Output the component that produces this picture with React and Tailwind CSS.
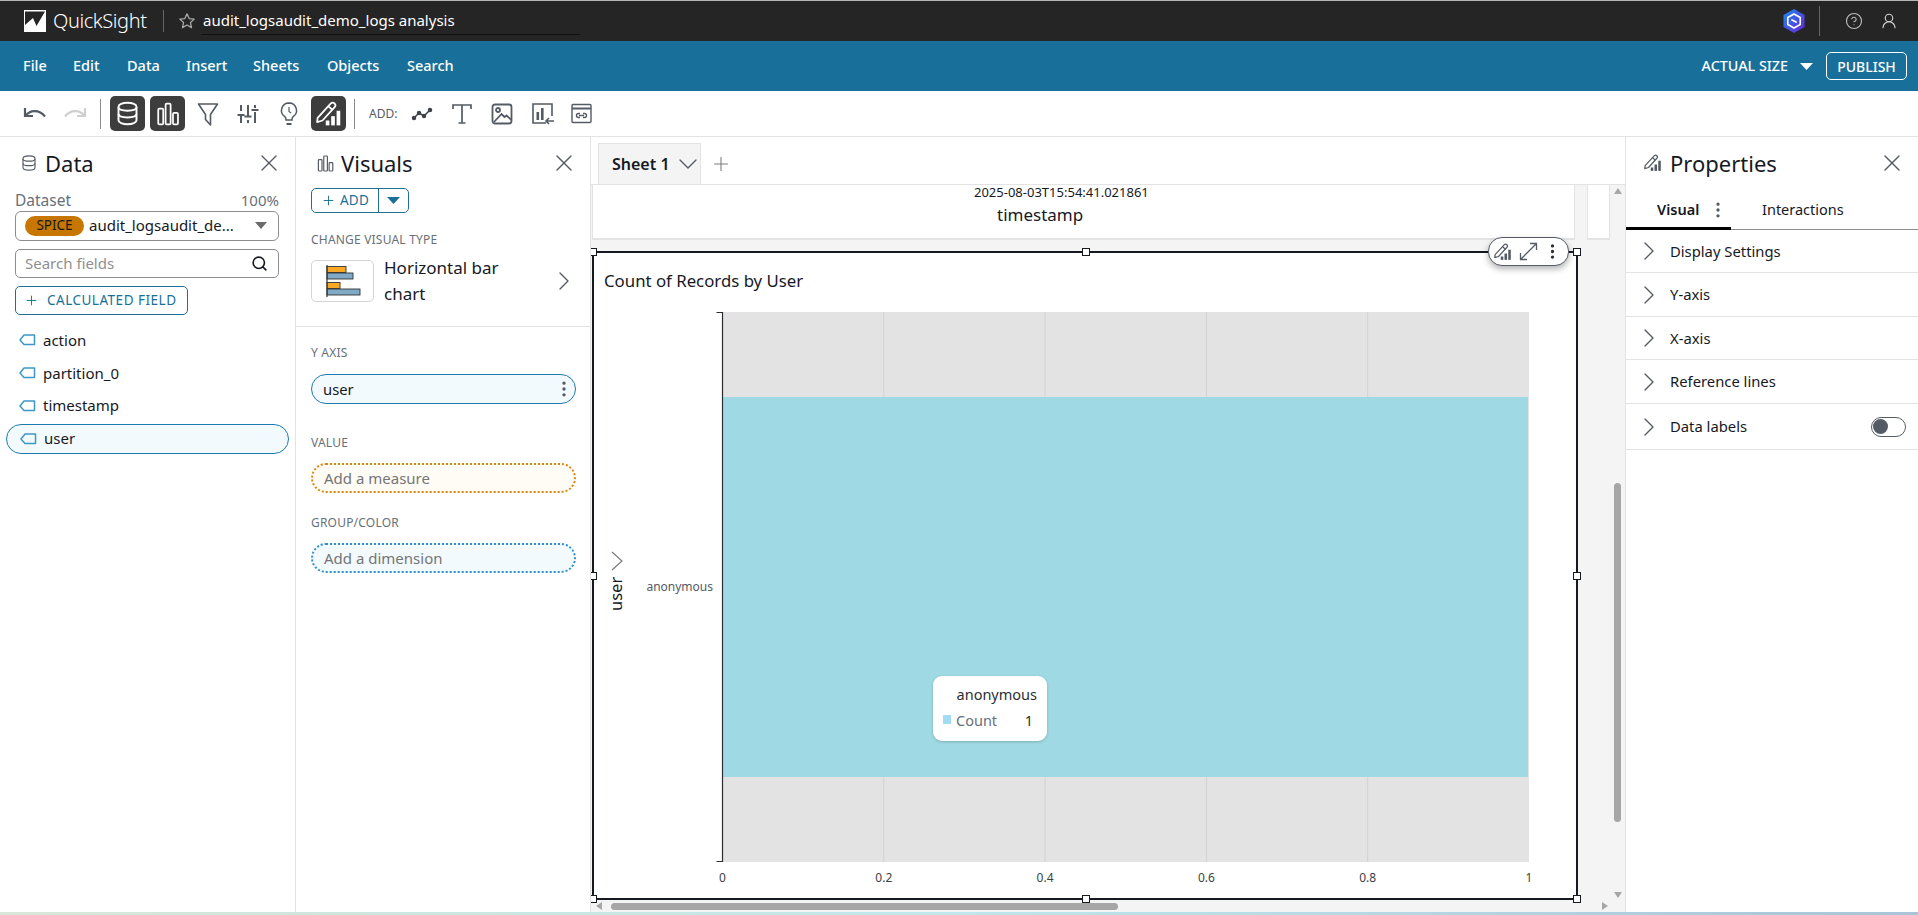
import React from "react";
import { X, ChevronRight, ChevronDown, Plus, Search, CircleHelp, UserRound, EllipsisVertical } from "lucide-react";

const Db = ({ size = 24, sw = 1.7 }) => (
  <svg width={size} height={size} viewBox="0 0 24 24" fill="none" stroke="currentColor" strokeWidth={sw}>
    <path d="M4 6c0-2 3.500-3.500 8-3.500S20 4 20 6v12c0 2-3.500 3.500-8 3.500S4 20 4 18z" />
    <path d="M4 6.500c0 2 3.500 3 8 3s8-1 8-3M4 12.500c0 2 3.500 3 8 3s8-1 8-3" />
  </svg>
);
const Bars = ({ size = 24, c = "currentColor", sw = 1.6 }) => (
  <svg width={size} height={size} viewBox="0 0 24 24" fill="none" stroke={c} strokeWidth={sw}>
    <rect x="3" y="7" width="4.600" height="14.500" rx="1" />
    <rect x="9.800" y="2.500" width="4.600" height="19" rx="1" />
    <rect x="16.600" y="11" width="4.600" height="10.500" rx="1" />
  </svg>
);
const Paint = ({ size = 24, c = "currentColor" }) => (
  <svg width={size} height={size} viewBox="0 0 24 24" fill="none" stroke={c} strokeWidth="1.600" strokeLinejoin="round">
    <path d="M1.500 15.500 13.500 2.500c1-1 2.600-1.100 3.600-.2 1 .9 1 2.400.1 3.400L6 18l-5 1.500z" />
    <path d="M11.500 5l3.800 3.300" />
    <rect x="9" y="18" width="3.400" height="4.500" fill={c} stroke="none" />
    <rect x="14" y="14" width="3.400" height="8.500" fill={c} stroke="none" />
    <rect x="19" y="9" width="3.400" height="13.500" fill={c} stroke="none" />
  </svg>
);
const Tag = () => (
  <svg width="17" height="12" viewBox="0 0 17 12" fill="none" stroke="#3f97c8" strokeWidth="1.500" strokeLinejoin="round" className="shrink-0">
    <path d="M5 1h10.500v9.500H5L1 6z" />
  </svg>
);
const Tri = ({ c = "#6b6b6b", w = 12, h = 7 }) => (
  <svg width={w} height={h} viewBox="0 0 12 7" preserveAspectRatio="none"><path d="M0 0h12L6 7z" fill={c} /></svg>
);
const Divider = () => <div className="w-px h-[30px] bg-[#8a8a8a] shrink-0" />;

const ToolBtn = ({ active, children, cls = "" }) => (
  <div className={`w-[35px] h-[35px] rounded-[5px] flex items-center justify-center shrink-0 ${active ? "bg-[#3d3d3d] text-white" : "text-[#545b64]"} ${cls}`}>
    {children}
  </div>
);

const PanelHeader = ({ icon, title, pad = "pl-5", iw = "w-[26px]" }) => (
  <div className={`flex items-center h-[52px] ${pad} pr-[12px]`}>
    <span className={`${iw} flex text-[#545b64]`}>{icon}</span>
    <span className="text-[22px] text-[#16191f] flex-1 leading-none">{title}</span>
    <X size={28} strokeWidth={1.150} className="text-[#545b64]" />
  </div>
);

const FieldRow = ({ label, h, active, cls = "" }) => (
  <div className={`flex items-center gap-[7px] text-[15px] text-[#16191f] pl-[13px] ml-[6px] w-[283px] ${h} ${cls} ${active ? "border border-[#1f7ab0] rounded-full bg-[#f2fafe]" : ""}`}>
    <Tag />
    <span>{label}</span>
  </div>
);

const Label = ({ children, cls = "" }) => (
  <div className={`text-[12px] text-[#687078] tracking-[0.2px] leading-none ${cls}`}>{children}</div>
);

const Well = ({ children, cls }) => (
  <div className={`h-[30px] w-[265px] rounded-full flex items-center pl-[11px] text-[15px] text-[#757575] border-2 border-dotted ${cls}`}>{children}</div>
);

const PropRow = ({ label, h, right }) => (
  <div className={`flex items-center border-b border-[#e3e3e3] pl-[7px] pr-[13px] ${h}`}>
    <ChevronRight size={32} strokeWidth={1} className="text-[#545b64] shrink-0" />
    <span className="ml-[5px] flex-1 text-[14.800px] text-[#16191f]">{label}</span>
    {right}
  </div>
);

const Handle = ({ cls }) => <div className={`absolute w-[8px] h-[8px] bg-white border border-[#16191f] ${cls}`} />;

const xs = [722.5, 883.8, 1045.1, 1206.4, 1367.7, 1529];
const ticks = ["0", "0.2", "0.4", "0.6", "0.8", "1"];

const Chart = () => (
  <svg width="980" height="592" viewBox="595 305 980 592" className="block">
    <rect x="722" y="312" width="807" height="550" fill="#e3e3e3" />
    {xs.slice(1, 5).map((x) => (<line key={x} x1={x} x2={x} y1="312" y2="862" stroke="#d2d2d2" strokeWidth="1" />))}
    <rect x="723" y="397" width="805" height="380" fill="#9fdae4" />
    <path d="M716.500 312.500H722.500V861.500H716.500" fill="none" stroke="#2a2e33" strokeWidth="1.200" />
    <path d="M612 552l10 9-10 9" fill="none" stroke="#7d7d7d" strokeWidth="1.200" />
    <text x="0" y="0" transform="translate(622 611) rotate(-90)" fontSize="16.500" fill="#16191f">user</text>
    <text x="713" y="591" textAnchor="end" fontSize="12" fill="#545b64">anonymous</text>
    {xs.map((x, i) => (<text key={x} x={x} y="882" textAnchor="middle" fontSize="12" fill="#3b3f44">{ticks[i]}</text>))}
  </svg>
);

export default function App() {
  return (
    <div className="w-[1918px] h-[915px] overflow-hidden flex flex-col bg-white font-['Noto_Sans','Open_Sans',sans-serif]">
      {/* top bar */}
      <div className="h-[41px] shrink-0 bg-[#252525] border-t border-[#b5b5b5] flex items-center relative">
        <svg width="22" height="22" viewBox="0 0 22 22" className="ml-6 shrink-0">
          <rect width="22" height="22" fill="#fff" />
          <path d="M1 15V1.500h20L12.500 16 9 8z" fill="#252525" />
        </svg>
        <span className="ml-[7px] text-[20px] text-white font-light leading-none w-[103px] tracking-[-0.4px]">QuickSight</span>
        <div className="w-px h-[22px] bg-[#666] ml-[7px]" />
        <svg width="18" height="18" viewBox="0 0 24 24" fill="none" stroke="#a9a9a9" strokeWidth="1.700" strokeLinejoin="round" className="ml-[14px]">
          <path d="M12 2.500l2.900 6.200 6.700.8-5 4.600 1.400 6.700L12 17.400l-6 3.400 1.400-6.700-5-4.600 6.700-.8z" />
        </svg>
        <div className="ml-[5px] w-[379px] h-[27px] border-b border-[#111] flex items-center pl-[2px] text-[15px] text-white">
          audit_logsaudit_demo_logs analysis
        </div>
        <div className="flex-1" />
        <svg width="24" height="26" viewBox="0 0 24 26" className="mr-[-1px]">
          <defs>
            <linearGradient id="hx" x1="0" y1="0" x2="1" y2="1">
              <stop offset="0" stopColor="#1b8cf0" />
              <stop offset="1" stopColor="#6a22d8" />
            </linearGradient>
          </defs>
          <path d="M12 1l10.500 6v12L12 25 1.500 19V7z" fill="url(#hx)" />
          <path d="M12 6l6.200 3.500v7L12 20l-6.200-3.500v-7z" fill="none" stroke="#fff" strokeWidth="1.600" />
          <path d="M10 12l4 2" stroke="#fff" strokeWidth="1.800" strokeLinecap="round" />
        </svg>
        <div className="w-px h-[30px] bg-[#666] ml-[14px]" />
        <CircleHelp size={18} strokeWidth={1.500} className="text-[#bdbdbd] ml-[25px]" />
        <UserRound size={18} strokeWidth={1.500} className="text-[#d5d5d5] ml-[17px] mr-[20px]" />
      </div>

      {/* menu bar */}
      <div className="h-[50px] shrink-0 bg-[#18709a] flex items-center pl-[23px] pr-[11px] text-white text-[14.500px] font-medium">
        <span className="w-[50px]">File</span>
        <span className="w-[54px]">Edit</span>
        <span className="w-[59px]">Data</span>
        <span className="w-[67px]">Insert</span>
        <span className="w-[74px]">Sheets</span>
        <span className="w-[80px]">Objects</span>
        <span>Search</span>
        <div className="flex-1" />
        <span className="text-[14.300px]">ACTUAL SIZE</span>
        <span className="ml-[12px] flex"><Tri c="#fff" w={13} h={7} /></span>
        <div className="ml-[13px] w-[81px] h-[28px] border border-white rounded-[5px] flex items-center justify-center text-[14px]">PUBLISH</div>
      </div>

      {/* toolbar */}
      <div className="h-[46px] shrink-0 border-b border-[#e3e3e3] flex items-center pl-[22px]">
        <svg width="26" height="20" viewBox="0 0 26 20" fill="none" stroke="#545b64" strokeWidth="2.200"><path d="M3 4v8h8" /><path d="M3.500 12C7.500 6 17 5 23 12.500" /></svg>
        <svg width="26" height="20" viewBox="0 0 26 20" fill="none" stroke="#cfcfcf" strokeWidth="2.200" className="ml-[14px]"><path d="M23 4v8h-8" /><path d="M22.500 12C18.500 6 9 5 3 12.500" /></svg>
        <div className="ml-[12px]"><Divider /></div>
        <ToolBtn active cls="ml-[9px]"><Db size={27} /></ToolBtn>
        <ToolBtn active cls="ml-[5px]"><Bars size={26} /></ToolBtn>
        <ToolBtn cls="ml-[5px]">
          <svg width="24" height="26" viewBox="0 0 24 26" fill="none" stroke="#545b64" strokeWidth="1.600" strokeLinejoin="round"><path d="M2.500 3h19L14.500 13.500V24l-5-5.500v-5z" /></svg>
        </ToolBtn>
        <ToolBtn cls="ml-[5px]">
          <svg width="24" height="24" viewBox="0 0 24 24" fill="none" stroke="#545b64" strokeWidth="2"><path d="M5 3v6M5 13v8M12 3v11M12 18v3M19 3v3M19 10v11M1.500 13h7M8.500 14.500h7M15.500 8h7" /></svg>
        </ToolBtn>
        <ToolBtn cls="ml-[6px]">
          <svg width="24" height="26" viewBox="0 0 24 26" fill="none" stroke="#545b64" strokeWidth="1.500"><path d="M12 2a7.500 7.500 0 00-4.200 13.700c.9.700 1.200 1.600 1.200 3.300h6c0-1.700.3-2.600 1.200-3.300A7.500 7.500 0 0012 2z" /><path d="M9.500 23h5" strokeWidth="2" /><path d="M12 6v4.500l2 1.500" strokeWidth="1.200" /></svg>
        </ToolBtn>
        <ToolBtn active cls="ml-[5px]"><Paint size={26} /></ToolBtn>
        <div className="ml-[8px]"><Divider /></div>
        <span className="ml-[14px] text-[12px] text-[#545b64] w-[35px]">ADD:</span>
        <ToolBtn>
          <svg width="22" height="22" viewBox="0 0 22 22" fill="none" stroke="#3f4347" strokeWidth="1.500"><path d="M3 15l5-5 5 3 6-6" /><circle cx="3" cy="15" r="1.500" fill="#3f4347" /><circle cx="8" cy="10" r="1.500" fill="#3f4347" /><circle cx="13" cy="13" r="1.500" fill="#3f4347" /><circle cx="19" cy="7" r="1.500" fill="#3f4347" /></svg>
        </ToolBtn>
        <ToolBtn cls="ml-[5px]">
          <svg width="22" height="24" viewBox="0 0 22 24" fill="none" stroke="#545b64" strokeWidth="1.700"><path d="M2 7V3h18v4M11 3v18M7.500 21h7" /></svg>
        </ToolBtn>
        <ToolBtn cls="ml-[5px]">
          <svg width="22" height="22" viewBox="0 0 22 22" fill="none" stroke="#545b64" strokeWidth="1.800"><rect x="1.500" y="1.500" width="19" height="19" rx="2.500" /><circle cx="7" cy="7" r="2" /><path d="M3 19l7.500-8 3 3 2-1.500 5 4.500" /></svg>
        </ToolBtn>
        <ToolBtn cls="ml-[6px]">
          <svg width="25" height="25" viewBox="0 0 25 25" fill="none" stroke="#545b64" strokeWidth="1.600"><path d="M16 22H3V3h19v12" /><rect x="6.500" y="11" width="2.600" height="8" fill="#545b64" stroke="none" /><rect x="11" y="7" width="2.600" height="12" fill="#545b64" stroke="none" /><path d="M24 20h-8m3-3l-3 3 3 3" /></svg>
        </ToolBtn>
        <ToolBtn cls="ml-[4px]">
          <svg width="21" height="21" viewBox="0 0 21 21" fill="none" stroke="#545b64" strokeWidth="1.400"><rect x="1" y="1.500" width="19" height="18" rx="1" /><path d="M1 5.500h19" strokeWidth="2" /><path d="M9 10.500H7.500a2 2 0 000 4H9M12 10.500h1.500a2 2 0 010 4H12M8 12.500h5" /></svg>
        </ToolBtn>
      </div>

      {/* main */}
      <div className="flex-1 flex min-h-0">
        {/* data panel */}
        <div className="w-[296px] shrink-0 border-r border-[#e3e3e3]">
          <PanelHeader title="Data" iw="w-[25px]" icon={<Db size={18} sw={1.500} />} />
          <div className="px-[15px] pr-[16px]">
            <div className="flex justify-between text-[15.500px] text-[#687078] leading-none mt-[4px]">
              <span>Dataset</span><span className="text-[15px]">100%</span>
            </div>
            <div className="mt-[2px] h-[30px] border border-[#8d8d8d] rounded-[6px] flex items-center pl-[9px] pr-[11px]">
              <span className="w-[59px] h-[20px] rounded-full bg-[#c77600] text-[13.500px] text-[#16191f] flex items-center justify-center shrink-0">SPICE</span>
              <span className="ml-[5px] flex-1 text-[15px] text-[#16191f] truncate">audit_logsaudit_de...</span>
              <span className="ml-[2px] flex"><Tri /></span>
            </div>
            <div className="mt-[8px] h-[29px] border border-[#8d8d8d] rounded-[5px] flex items-center pl-[9px] pr-[10px] text-[15px] text-[#8f8f8f]">
              <span className="flex-1">Search fields</span>
              <Search size={17} strokeWidth={2.300} className="text-[#16191f]" />
            </div>
            <div className="mt-[8px] w-[173px] h-[29px] border border-[#1f6f96] rounded-[5px] flex items-center pl-[8px] text-[13.500px] text-[#18709a] tracking-[0.5px]">
              <Plus size={15} strokeWidth={1.500} />
              <span className="ml-[8px] whitespace-nowrap">CALCULATED FIELD</span>
            </div>
          </div>
          <div className="mt-[9px]">
            <FieldRow label="action" h="h-[33px]" />
            <FieldRow label="partition_0" h="h-[33px]" />
            <FieldRow label="timestamp" h="h-[32px]" />
            <FieldRow label="user" h="h-[30px]" cls="mt-[2px]" active />
          </div>
        </div>

        {/* visuals panel */}
        <div className="w-[295px] shrink-0 border-r border-[#e3e3e3]">
          <PanelHeader title="Visuals" iw="w-[25px]" icon={<Bars size={19} c="#545b64" sw={1.500} />} pad="pl-[20px]" />
          <div className="pl-[15px]">
            <div className="w-[98px] h-[25px] border border-[#1f6f96] rounded-[5px] flex items-center text-[#18709a] -mt-[1px]">
              <div className="w-[67px] h-full border-r border-[#1f6f96] flex items-center justify-center gap-[4px] text-[13.500px] tracking-[0.3px]">
                <Plus size={15} strokeWidth={1.500} /><span>ADD</span>
              </div>
              <div className="flex-1 flex justify-center"><Tri c="#18709a" w={13} h={7} /></div>
            </div>
            <Label cls="mt-[21px]">CHANGE VISUAL TYPE</Label>
            <div className="flex items-center mt-[14px] h-[42px] pr-[10px]">
              <div className="w-[63px] h-[42px] border border-[#d5d5d5] rounded-[5px] flex items-center justify-center shrink-0">
                <svg width="36" height="32" viewBox="0 0 36 32" stroke="#333" strokeWidth="0.900">
                  <rect x="2" y="1.500" width="19" height="6" fill="#f9a825" />
                  <rect x="2" y="8" width="26" height="6" fill="#7fa9c4" />
                  <rect x="2" y="17.500" width="13" height="6" fill="#f9a825" />
                  <rect x="2" y="24" width="33" height="6" fill="#7fa9c4" />
                  <path d="M2 0v32" strokeWidth="1.200" />
                </svg>
              </div>
              <div className="ml-[10px] flex-1 text-[17px] leading-[26px] text-[#16191f]">Horizontal bar<br />chart</div>
              <ChevronRight size={32} strokeWidth={1} className="text-[#545b64]" />
            </div>
          </div>
          <div className="h-px bg-[#e3e3e3] mt-[24px]" />
          <div className="pl-[15px]">
            <Label cls="mt-[20px]">Y AXIS</Label>
            <div className="mt-[15px] h-[30px] w-[265px] rounded-full border border-[#1f7ab0] bg-[#f2fafe] flex items-center pl-[11px] pr-[1px] text-[14.800px] text-[#16191f]">
              <span className="flex-1">user</span>
              <EllipsisVertical size={20} strokeWidth={2} className="text-[#545b64]" />
            </div>
            <Label cls="mt-[33px]">VALUE</Label>
            <Well cls="mt-[14px] border-[#d9860f] bg-[#fffcf6]">Add a measure</Well>
            <Label cls="mt-[24px]">GROUP/COLOR</Label>
            <Well cls="mt-[14px] border-[#2f8fcb] bg-[#f2fafe]">Add a dimension</Well>
          </div>
        </div>

        {/* center */}
        <div className="w-[1034px] shrink-0 flex flex-col">
          <div className="h-[48px] shrink-0 flex items-end border-b border-[#e3e3e3] pl-[7px]">
            <div className="w-[103px] shrink-0 h-[41px] bg-[#f4f4f4] border border-b-0 border-[#e3e3e3] flex items-center pl-[13px] text-[16px] font-semibold text-[#16191f] whitespace-nowrap">
              Sheet 1
              <ChevronDown size={32} strokeWidth={1} className="ml-[2px] text-[#545b64] shrink-0" />
            </div>
            <Plus size={22} strokeWidth={1.200} className="ml-[9px] mb-[9px] text-[#7d7d7d]" />
          </div>
          <div className="flex-1 bg-[#f4f4f4] relative overflow-hidden pl-[1px] min-h-0">
            <div className="flex">
              <div className="w-[983px] h-[55px] bg-white border-x border-b-2 border-[#e3e3e3] flex flex-col items-start text-[#16191f]">
                <span className="text-[13px] leading-none mt-[1px] ml-[381px]">2025-08-03T15:54:41.021861</span>
                <span className="text-[17px] leading-none mt-[7px] ml-[404px]">timestamp</span>
              </div>
              <div className="ml-[12px] w-[23px] h-[55px] bg-white border-x border-b-2 border-[#e3e3e3]" />
            </div>
            <div className="mt-[11px] w-[986px] h-[649px] bg-white border-2 border-[#16191f] relative">
              <div className="pl-[10px] pt-[16px] text-[16.800px] leading-[24px] text-[#16191f]">Count of Records by User</div>
              <div className="mt-[12px] ml-[1px]"><Chart /></div>
              <Handle cls="-left-[5px] -top-[5px]" />
              <Handle cls="left-[488px] -top-[5px]" />
              <Handle cls="-right-[5px] -top-[5px]" />
              <Handle cls="-left-[5px] top-[319px]" />
              <Handle cls="-right-[5px] top-[319px]" />
              <Handle cls="-left-[5px] -bottom-[5px]" />
              <Handle cls="left-[488px] -bottom-[5px]" />
              <Handle cls="-right-[5px] -bottom-[5px]" />
              <div className="absolute left-[894px] -top-[16px] w-[81px] h-[29px] bg-white border border-[#545b64] rounded-[14px] shadow-[0_3px_6px_rgba(0,0,0,0.3)] flex items-center pl-[5px] text-[#545b64]">
                <Paint size={18} />
                <svg width="19" height="19" viewBox="0 0 19 19" fill="none" stroke="#545b64" strokeWidth="1.300" className="ml-[7px]"><path d="M1.500 17.500l16-16M11 1.500h6.500V8M1.500 11v6.500H8" /></svg>
                <EllipsisVertical size={19} strokeWidth={2.200} className="ml-[5px] text-[#2b2f33]" />
              </div>
              <div className="absolute left-[339px] top-[423px] w-[114px] h-[65px] bg-white rounded-[9px] shadow-[0_1px_3px_rgba(0,0,0,0.2)] text-[14.500px] px-[10px] pt-[11px]">
                <div className="text-right leading-none text-[#2b2f33]">anonymous</div>
                <div className="flex items-center mt-[11px] leading-none text-[#687078]">
                  <span className="w-[8px] h-[9px] bg-[#a2dcf0]" />
                  <span className="ml-[5px] flex-1">Count</span>
                  <span className="text-[#2b2f33] mr-[4px]">1</span>
                </div>
              </div>
            </div>
            {/* scrollbars */}
            <div className="absolute right-[3px] top-[3px]"><svg width="8" height="6" viewBox="0 0 8 6"><path d="M4 0l4 6H0z" fill="#a6a6a6" /></svg></div>
            <div className="absolute right-[4px] top-[298px] w-[7px] h-[339px] rounded-full bg-[#a6a6a6]" />
            <div className="absolute right-[3px] bottom-[14px]"><svg width="8" height="6" viewBox="0 0 8 6"><path d="M4 6l4-6H0z" fill="#a6a6a6" /></svg></div>
            <div className="absolute left-[5px] bottom-[2px]"><svg width="6" height="8" viewBox="0 0 6 8"><path d="M0 4l6-4v8z" fill="#a6a6a6" /></svg></div>
            <div className="absolute left-[20px] bottom-[2px] w-[507px] h-[7px] rounded-full bg-[#a6a6a6]" />
            <div className="absolute left-[1011px] bottom-[2px]"><svg width="6" height="8" viewBox="0 0 6 8"><path d="M6 4L0 0v8z" fill="#a6a6a6" /></svg></div>
          </div>
        </div>

        {/* properties */}
        <div className="flex-1 border-l border-[#e3e3e3]">
          <PanelHeader title="Properties" icon={<Paint size={18} c="#545b64" />} pad="pl-[18px]" />
          <div className="h-[41px] border-b border-[#8d8d8d] flex relative">
            <div className="w-[105px] h-[41px] border-b-[3px] border-black flex items-center pl-[31px] text-[14.500px] font-semibold text-[#16191f] pt-[4px]">
              Visual
              <EllipsisVertical size={20} strokeWidth={2} className="ml-[9px] text-[#545b64] shrink-0" />
            </div>
            <div className="ml-[31px] flex items-center text-[14.500px] text-[#16191f] pt-[2px]">Interactions</div>
          </div>
          <PropRow label="Display Settings" h="h-[43px]" />
          <PropRow label="Y-axis" h="h-[44px]" />
          <PropRow label="X-axis" h="h-[43px]" />
          <PropRow label="Reference lines" h="h-[44px]" />
          <PropRow label="Data labels" h="h-[46px]" right={
            <div className="w-[35px] h-[20px] rounded-full border border-[#545b64] flex items-center pl-[1px] -mr-[1px]">
              <span className="w-[15px] h-[15px] rounded-full bg-[#545b64]" />
            </div>
          } />
        </div>
      </div>
      <div className="h-[3px] shrink-0 bg-gradient-to-r from-[#d8e6d8] via-[#bfe6ea] to-[#a9c4d8]" />
    </div>
  );
}
